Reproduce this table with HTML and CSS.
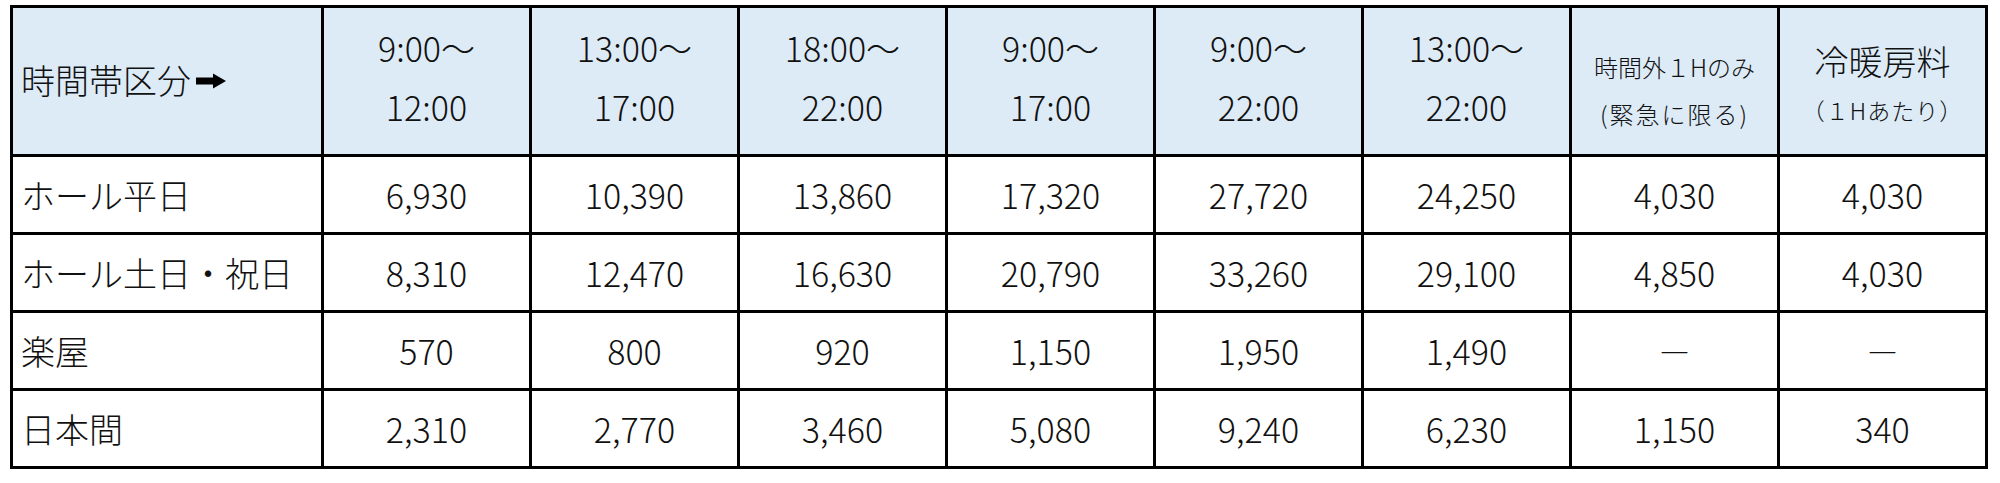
FILE: index.html
```html
<!DOCTYPE html>
<html lang="ja">
<head>
<meta charset="utf-8">
<title>料金表</title>
<link rel="stylesheet" href="styles.css">
</head>
<body>
<table class="fees">
  <thead>
    <tr class="head-row">
      <th class="c-label h-label">時間帯区分<svg class="arrow" viewBox="0 0 36 34" width="36" height="34" aria-hidden="true"><rect x="5" y="13.5" width="20" height="7" fill="#000"/><polygon points="22,9.5 35,17 22,24.5" fill="#000"/></svg></th>
      <th class="c-val h-time"><div>9:00～</div><div>12:00</div></th>
      <th class="c-val h-time"><div>13:00～</div><div>17:00</div></th>
      <th class="c-val h-time"><div>18:00～</div><div>22:00</div></th>
      <th class="c-val h-time"><div>9:00～</div><div>17:00</div></th>
      <th class="c-val h-time"><div>9:00～</div><div>22:00</div></th>
      <th class="c-val h-time"><div>13:00～</div><div>22:00</div></th>
      <th class="c-val h-small"><div>時間外１Hのみ</div><div class="spaced">(緊急に限る)</div></th>
      <th class="c-val h-mixed"><div class="big">冷暖房料</div><div class="sub">（１Hあたり）</div></th>
    </tr>
  </thead>
  <tbody>
    <tr>
      <td class="c-label">ホール平日</td>
      <td class="c-val">6,930</td>
      <td class="c-val">10,390</td>
      <td class="c-val">13,860</td>
      <td class="c-val">17,320</td>
      <td class="c-val">27,720</td>
      <td class="c-val">24,250</td>
      <td class="c-val">4,030</td>
      <td class="c-val">4,030</td>
    </tr>
    <tr>
      <td class="c-label">ホール土日・祝日</td>
      <td class="c-val">8,310</td>
      <td class="c-val">12,470</td>
      <td class="c-val">16,630</td>
      <td class="c-val">20,790</td>
      <td class="c-val">33,260</td>
      <td class="c-val">29,100</td>
      <td class="c-val">4,850</td>
      <td class="c-val">4,030</td>
    </tr>
    <tr>
      <td class="c-label">楽屋</td>
      <td class="c-val">570</td>
      <td class="c-val">800</td>
      <td class="c-val">920</td>
      <td class="c-val">1,150</td>
      <td class="c-val">1,950</td>
      <td class="c-val">1,490</td>
      <td class="c-val dash">―</td>
      <td class="c-val dash">―</td>
    </tr>
    <tr>
      <td class="c-label">日本間</td>
      <td class="c-val">2,310</td>
      <td class="c-val">2,770</td>
      <td class="c-val">3,460</td>
      <td class="c-val">5,080</td>
      <td class="c-val">9,240</td>
      <td class="c-val">6,230</td>
      <td class="c-val">1,150</td>
      <td class="c-val">340</td>
    </tr>
  </tbody>
</table>
</body>
</html>
```

FILE: styles.css
```css
html, body {
  margin: 0;
  padding: 0;
  background: #ffffff;
}

body {
  padding: 5px 0 0 10px;
  font-family: "Noto Sans CJK JP", "Noto Sans", sans-serif;
  color: #111;
}

.fees {
  table-layout: fixed;
  border-collapse: separate;
  border-spacing: 0;
  width: 1978px;
  border-top: 3px solid #000;
  border-left: 3px solid #000;
  font-size: 34px;
}

.fees th,
.fees td {
  box-sizing: border-box;
  border-right: 3px solid #000;
  border-bottom: 3px solid #000;
  font-weight: 300;
  padding: 0;
  white-space: nowrap;
}

.c-label {
  width: 311px;
  text-align: left;
  padding-left: 8px !important;
}

.c-val {
  width: 208px;
  text-align: center;
}

.head-row th {
  background: #ddebf7;
  height: 149px;
  vertical-align: top;
}

.fees tbody td {
  height: 78px;
  vertical-align: middle;
  line-height: 40px;
}

.h-label {
  line-height: 50px;
  padding-top: 47px !important;
}

.arrow {
  width: 36px;
  height: 34px;
  vertical-align: -4px;
}

.h-time {
  line-height: 59px;
  padding-top: 10px !important;
}

.h-small {
  font-size: 24px;
  line-height: 47px;
  padding-top: 35px !important;
}

.h-small .spaced {
  letter-spacing: 2px;
}

.h-mixed {
  padding-top: 27px !important;
}

.h-mixed .big {
  font-size: 34px;
  line-height: 52px;
}

.h-mixed .sub {
  font-size: 23px;
  line-height: 46px;
  letter-spacing: 1px;
}

.dash {
  font-size: 30px;
}
```
